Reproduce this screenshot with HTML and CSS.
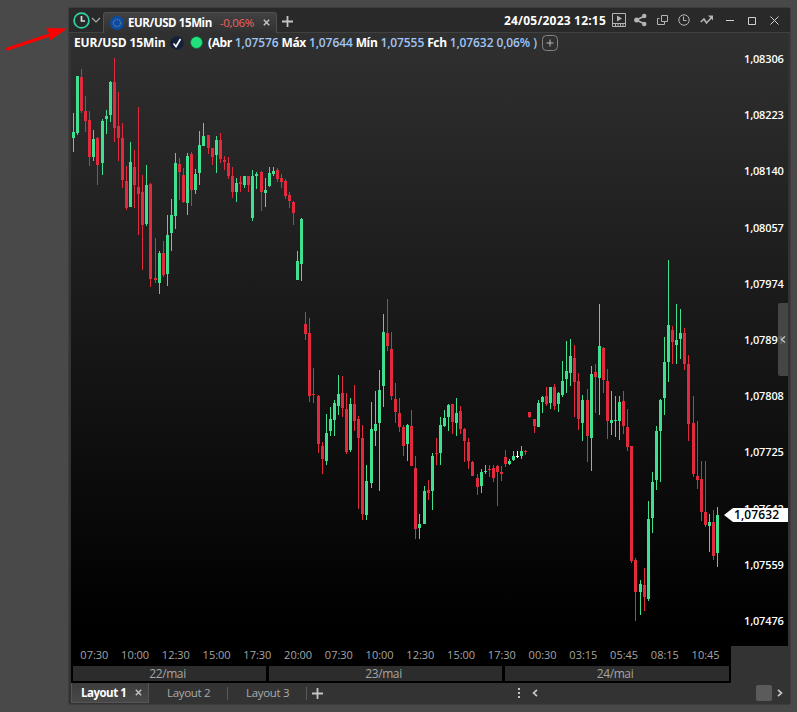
FILE: index.html
```html
<!DOCTYPE html>
<html lang="pt">
<head>
  <meta charset="UTF-8">
  <meta name="viewport" content="width=device-width, initial-scale=1.0">
  <title>EUR/USD 15Min</title>
  <link rel="stylesheet" href="styles.css">
</head>

<body>
  <div class="window">
    <header class="titlebar">
      <svg class="clock" width="17" height="17" viewBox="0 0 17 17"><circle cx="8.5" cy="8.5" r="7.4"/><path d="M8.5 4v5h3.5"/></svg>
      <svg class="chevron" width="10" height="6" viewBox="0 0 10 6"><path d="M1 1l4 4 4-4"/></svg>
      <div class="tab">
        <svg class="flag" width="14" height="14" viewBox="0 0 14 14"><circle class="disc" cx="7" cy="7" r="7"/><circle class="stars" cx="7" cy="7" r="3.6"/></svg>
        <b class="tab-name">EUR/USD 15Min</b>
        <span class="change">-0,06%</span>
        <svg class="close" width="7" height="7" viewBox="0 0 7 7"><path d="M.8.8l5.4 5.4M6.2.8L.8 6.2"/></svg>
      </div>
      <svg class="plus" width="11" height="11" viewBox="0 0 11 11"><path d="M5.5 0v11M0 5.5h11"/></svg>
      <b class="date">24/05/2023 12:15</b>
      <div class="tools">
        <svg width="14" height="14" viewBox="0 0 14 14"><path d="M.5.5h13v13H.5zM.5 10.5h13M3.5 11v2M6 11v2M8.5 11v2M11 11v2"/><path class="fill" d="M5 2.5l5 3-5 3z"/></svg>
        <svg width="13" height="14" viewBox="0 0 13 14"><path class="thick" d="M10.5 3L2.5 7l8 4"/><circle class="fill" cx="10.2" cy="3" r="2.3"/><circle class="fill" cx="2.6" cy="7" r="2.5"/><circle class="fill" cx="10.2" cy="11" r="2.3"/></svg>
        <svg width="12" height="12" viewBox="0 0 12 12"><path d="M4.5 1.5h6v6h-6zM2.5 4.5H.5v6h7V8"/></svg>
        <svg width="12" height="12" viewBox="0 0 12 12"><circle cx="6" cy="6" r="5.2"/><path d="M5.5 2.5v4h3"/></svg>
        <svg width="14" height="10" viewBox="0 0 14 10"><path class="thick" d="M.8 7L4 4l2.5 4 5.5-6"/><path class="fill" d="M8 .5h5v5z"/></svg>
      </div>
      <div class="controls">
        <svg width="8" height="9" viewBox="0 0 8 9"><path d="M0 4.5h8"/></svg>
        <svg width="8" height="9" viewBox="0 0 8 9"><path d="M.5 1.5h7v7h-7z"/></svg>
        <svg width="9" height="9" viewBox="0 0 9 9"><path d="M.5.5l8 8M8.5.5l-8 8"/></svg>
      </div>
    </header>

    <main class="chart">
      <div class="legend">
        <b class="symbol">EUR/USD 15Min</b>
        <svg class="check" width="14" height="14" viewBox="0 0 14 14"><circle cx="7" cy="7" r="6.8"/><path d="M3.5 7.5L6 10.5l4.5-7.5"/></svg>
        <i class="dot"></i>
        <div class="ohlc">
          <span>(Abr</span> <em>1,07576</em> <span>Máx</span> <em>1,07644</em> <span>Mín</span> <em>1,07555</em> <span>Fch</span> <em>1,07632</em> <em>0,06% )</em>
        </div>
        <svg class="add" width="16" height="16" viewBox="0 0 16 16"><rect x=".5" y=".5" width="15" height="15" rx="4"/><path d="M8 4.5v7M4.5 8h7"/></svg>
      </div>

      <div class="plot">
        <svg class="candles" id="candles" width="660" height="593" viewBox="71 52 660 593"></svg>
        <div class="prices">
          <span>1,08306</span><span>1,08223</span><span>1,08140</span><span>1,08057</span>
          <span>1,07974</span><span>1,07891</span><span>1,07808</span><span>1,07725</span>
          <span>1,07642</span><span>1,07559</span><span>1,07476</span>
        </div>
      </div>
      <div class="last-price">1,07632</div>
      <div class="side-handle"><svg width="6" height="7" viewBox="0 0 6 7"><path d="M5 .5l-3.5 3 3.5 3"/></svg></div>
    </main>

    <div class="axis">
      <div class="hours">
        <span>07:30</span><span>10:00</span><span>12:30</span><span>15:00</span>
        <span>17:30</span><span>20:00</span><span>07:30</span><span>10:00</span>
        <span>12:30</span><span>15:00</span><span>17:30</span><span>00:30</span>
        <span>03:15</span><span>05:45</span><span>08:15</span><span>10:45</span>
      </div>
      <div class="days"><span>22/mai</span><span>23/mai</span><span>24/mai</span></div>
    </div>

    <footer class="layouts">
      <div class="layout active"><b>Layout 1</b><svg width="7" height="7" viewBox="0 0 7 7"><path d="M.8.8l5.4 5.4M6.2.8L.8 6.2"/></svg></div>
      <div class="layout">Layout 2</div>
      <div class="layout">Layout 3</div>
      <svg class="plus" width="11" height="11" viewBox="0 0 11 11"><path d="M5.5 0v11M0 5.5h11"/></svg>
      <svg class="grip" width="2" height="10" viewBox="0 0 2 10"><path d="M0 1h2M0 5h2M0 9h2"/></svg>
      <svg class="arrow" width="6" height="8" viewBox="0 0 6 8"><path d="M5 .8L1.5 4 5 7.2"/></svg>
      <i class="thumb"></i>
      <svg class="arrow next" width="6" height="8" viewBox="0 0 6 8"><path d="M1 .8L4.5 4 1 7.2"/></svg>
    </footer>
  </div>

  <svg class="pointer" width="64" height="26" viewBox="0 0 64 26"><path class="line" d="M2.5 23L46 8.5"/><path class="head" d="M62 2.500L41 2l3.500 6 .5 6.500z"/></svg>

  <script src="chart.js"></script>
</body>
</html>
```

FILE: styles.css
```css
* {
  box-sizing: border-box;
}

body {
  margin: 0;
  height: 712px;
  padding: 7px 6px 6px 68px;
  overflow: hidden;
  background: #494949;
  font-family: "Open Sans", "Noto Sans", sans-serif;
  font-size: 12px;
  color: #fff;
}

svg {
  display: block;
  flex: none;
  fill: none;
  stroke: #c4c4c4;
}

.window {
  display: flex;
  flex-direction: column;
  width: 723px;
  height: 698px;
  background: #333;
  border: 1px solid #3d3d3d;
  border-radius: 3px;
  padding: 0 2px 1px;
}

/* title bar */
.titlebar {
  display: flex;
  align-items: center;
  flex: none;
  height: 25px;
  margin: 0 -2px;
  padding-left: 4px;
  background: #292929;
  border-bottom: 1px solid #414141;
}

.clock {
  margin-top: 1px;
  stroke: #2ed3a6;
  stroke-width: 1.7;
}

.clock path {
  stroke: #ddd;
}

.chevron {
  margin-left: 1px;
  stroke-width: 1.2;
  stroke: #aaa;
}

.tab {
  display: flex;
  align-items: center;
  width: 174px;
  height: 21px;
  margin: 4px 0 0 2px;
  padding-left: 6px;
  background: linear-gradient(#424242, #303030);
  border: 1px solid #505050;
  border-bottom: 0;
  border-radius: 3px 3px 0 0;
  white-space: nowrap;
}

.flag {
  stroke: none;
}

.flag .disc {
  fill: #0a4ba5;
}

.flag .stars {
  stroke: #58798b;
  stroke-width: 1.4;
  stroke-dasharray: 1.5 .8;
}

.tab-name {
  width: 92px;
  margin-left: 4px;
  font-size: 11.5px;
  letter-spacing: -.4px;
}

.change {
  width: 43px;
  color: #f0605e;
  font-size: 11.5px;
  letter-spacing: -.35px;
}

.close {
  stroke-width: 1.5;
}

.plus {
  margin-left: 5px;
  stroke-width: 1.8;
}

.titlebar .plus {
  margin-top: 2px;
}

.date {
  width: 108px;
  margin-left: 211px;
  padding-top: 1px;
  font-size: 12px;
  letter-spacing: .2px;
  white-space: nowrap;
}

.tools {
  display: flex;
  align-items: center;
  gap: 9px;
}

.tools svg {
  stroke: #b4b4b4;
}

.tools svg:nth-child(2) {
  margin: 0 1px 0 -1px;
}

.tools svg:nth-child(4) {
  margin-right: 1px;
}

.tools .thick {
  stroke-width: 1.6;
}

.tools .fill {
  fill: #b4b4b4;
  stroke: none;
}

.controls {
  display: flex;
  align-items: center;
  gap: 14px;
  margin-left: 12px;
}

.controls svg {
  stroke: #d0d0d0;
}

/* chart */
.chart {
  position: relative;
  flex: none;
  height: 613px;
  background: linear-gradient(#303030, #1b1b1b 42%, #000 97%);
}

.legend {
  display: flex;
  align-items: center;
  height: 19px;
  padding-left: 3px;
  white-space: nowrap;
}

.symbol {
  width: 96px;
  letter-spacing: -.1px;
}

.check {
  stroke: none;
}

.check circle {
  fill: #142038;
}

.check path {
  stroke: #fff;
  stroke-width: 1.7;
}

.dot {
  width: 13px;
  height: 13px;
  margin-left: 6px;
  border: 1px solid #17663b;
  border-radius: 50%;
  background: #21e27b;
}

.ohlc {
  width: 334px;
  margin-left: 5px;
  font-weight: 600;
  letter-spacing: -.1px;
}

.ohlc span {
  font-weight: 700;
  letter-spacing: -.4px;
}

.ohlc em {
  font-style: normal;
  color: #9fc5f5;
}

.add {
  stroke: #858585;
}

.add path {
  stroke: #bbb;
}

.plot {
  display: flex;
  height: 593px;
}

.prices {
  display: flex;
  flex-direction: column;
  justify-content: space-between;
  height: 578px;
  margin-top: -1px;
  padding-left: 13px;
  font-size: 11px;
  font-weight: 600;
  letter-spacing: -.15px;
  line-height: 16px;
}

.last-price {
  position: absolute;
  top: 475px;
  right: 0;
  width: 64px;
  height: 14px;
  padding-left: 10px;
  background: #fff;
  clip-path: polygon(0 50%, 9px 0, 100% 0, 100% 100%, 9px 100%);
  color: #000;
  font-size: 12px;
  font-weight: 600;
  letter-spacing: .1px;
  line-height: 14px;
}

.side-handle {
  position: absolute;
  top: 270px;
  right: 0;
  display: flex;
  align-items: center;
  justify-content: center;
  width: 10px;
  height: 73px;
  background: rgba(78, 78, 78, .85);
  border-radius: 2px 0 0 2px;
}

.side-handle svg {
  stroke-width: 1.4;
}

/* time axis */
.axis {
  flex: none;
  width: 660px;
  height: 37px;
  padding: 0 2px;
  background: #000;
  color: #a5a5a5;
}

.hours {
  display: flex;
  width: 653px;
  height: 20px;
  padding-left: 1px;
  font-size: 11px;
  line-height: 18px;
}

.hours span {
  flex: 1;
  text-align: center;
}

.days {
  display: grid;
  grid-template-columns: 193px 233px 224px;
  gap: 3px;
  height: 15px;
  line-height: 15px;
  letter-spacing: -.4px;
  text-align: center;
}

.days span {
  padding-right: 4px;
  background: #2c2c2c;
}

/* layout tabs */
.layouts {
  display: flex;
  align-items: center;
  flex: none;
  height: 20px;
  font-size: 11.5px;
  letter-spacing: -.3px;
  color: #aaa;
}

.layout {
  display: flex;
  align-items: center;
  width: 79px;
  height: 13px;
  padding: 0 0 1px 18px;
  border-right: 1px solid #5a5a5a;
  white-space: nowrap;
}

.layout.active {
  justify-content: space-between;
  width: 78px;
  height: 20px;
  padding: 0 6px 0 9px;
  background: linear-gradient(#3c3c3c, #484848);
  border: 1px solid #555;
  border-top: 0;
  color: #fff;
  letter-spacing: -.5px;
}

.layout.active svg {
  stroke-width: 1.4;
}

.grip {
  margin-left: 195px;
  stroke-width: 2;
}

.arrow {
  margin-left: 12px;
  stroke-width: 1.7;
}

.thumb {
  width: 16px;
  height: 16px;
  margin-left: 218px;
  background: #5b5b5b;
  border-radius: 2px;
}

.arrow.next {
  margin-left: 5px;
}

/* arrow drawn over the window edge */
.pointer {
  position: absolute;
  top: 26px;
  left: 5px;
  stroke: none;
}

.pointer .line {
  stroke: #f00;
  stroke-width: 3;
  stroke-linecap: round;
}

.pointer .head {
  fill: #f00;
}
```

FILE: chart.js
```js
const colors = { g: "#3fe08f", r: "#e3293c", w: "#ffffff" };

// x, high, body top, body bottom, low, color
const data = `
73 113 132 138 152 g|77 76 76 133 135 g|81 69 77 111 113 r|85 96 111 121 132 r
89 111 120 157 166 r|93 130 139 157 161 g|97 137 138 165 185 r|102 119 121 163 175 g
106 110 116 119 134 g|110 81 82 115 122 g|114 58 82 128 142 r|118 92 126 138 161 r
122 123 138 180 188 r|126 166 181 208 210 r|130 142 162 207 207 g|134 150 167 185 208 r
138 107 187 194 235 r|142 175 192 225 270 r|146 165 185 224 226 g|150 183 184 279 287 r
155 238 278 280 283 r|159 251 253 283 294 g|163 241 253 275 277 r|167 215 235 274 286 g
171 199 215 233 251 g|175 153 163 216 229 g|179 158 164 172 200 r|183 168 175 202 203 r
187 153 156 203 215 g|191 152 154 190 206 r|195 169 174 190 194 g|199 131 145 173 185 g
203 123 136 146 146 g|208 135 135 148 154 r|212 148 148 157 165 r|216 136 140 155 173 g
220 133 140 159 163 r|224 156 160 162 170 r|228 157 163 176 179 r|232 167 176 192 198 r
236 178 183 192 202 g|240 176 182 184 192 r|244 176 176 185 188 g|248 176 176 185 192 r
252 170 176 218 221 g|256 172 174 176 189 g|261 171 172 192 211 r|265 178 190 193 207 g
269 167 173 186 187 g|273 167 171 174 176 g|277 168 170 179 182 r|281 174 178 182 188 r
285 179 181 196 199 r|289 192 195 201 208 r|293 201 202 213 225 r|297 251 261 280 280 g
301 218 219 264 281 g|305 312 324 334 340 r|309 318 333 396 402 r|313 368 394 395 403 r
318 395 396 444 453 r|322 442 446 459 474 r|326 414 433 461 465 g|330 407 419 431 436 g
334 400 403 420 436 g|338 375 394 406 415 g|342 376 393 408 417 r|346 393 409 452 454 r
350 398 404 450 452 g|354 385 404 421 431 r|358 416 419 438 509 r|362 425 438 514 520 r
366 465 481 515 520 g|371 402 429 483 488 g|375 391 424 431 446 g|379 370 390 423 491 g
383 314 332 386 407 g|387 299 333 346 351 r|391 332 349 396 400 r|395 383 399 412 423 r
399 398 413 427 432 r|403 425 427 446 456 r|407 424 425 444 461 g|411 410 426 466 466 r
415 456 468 529 539 r|419 514 524 528 539 g|424 486 491 524 524 g|428 480 490 493 500 r
432 453 456 491 510 g|436 438 453 454 465 r|440 417 425 453 465 g|444 410 418 426 427 g
448 404 405 417 431 g|452 404 404 422 434 r|456 398 413 423 436 g|460 406 411 429 434 r
464 428 429 441 462 r|468 438 442 461 469 r|472 461 462 476 476 r|477 474 478 487 495 r
481 469 472 486 493 g|485 465 471 472 474 g|489 465 469 470 477 r|493 465 468 478 482 r
497 465 466 472 506 r|501 466 472 474 481 r|505 450 457 464 467 r|509 459 461 464 465 g
513 451 456 460 461 g|517 451 456 457 458 w|521 446 451 456 459 g|525 450 451 452 455 r
529 412 412 417 418 r|534 419 419 426 433 r|538 400 403 427 427 g|542 396 397 402 413 g
546 387 396 404 406 r|550 387 387 403 409 g|554 384 387 406 410 r|558 392 393 404 412 g
562 361 381 395 397 g|566 341 371 379 393 g|570 339 356 373 386 g|574 345 358 382 417 r
578 373 381 419 430 r|582 395 400 423 441 g|587 389 400 436 462 r|591 366 374 438 471 g
595 364 372 377 413 r|599 304 346 378 415 g|603 347 348 380 393 r|607 369 381 421 439 r
611 391 420 423 435 g|615 396 420 421 437 g|619 396 402 421 440 g|623 391 401 426 434 r
627 409 427 447 451 r|631 446 446 561 563 r|635 558 560 592 621 r|640 580 584 592 615 g
644 568 585 597 611 r|648 501 519 599 601 g|652 472 482 518 533 g|656 426 431 480 490 g
660 399 400 431 482 g|664 337 362 398 415 g|668 260 325 362 382 g|672 326 330 342 364 r
676 304 340 345 364 g|680 309 333 339 359 g|684 328 333 364 370 r|688 355 364 424 441 r
693 396 423 474 477 r|697 421 476 480 489 r|701 461 479 512 521 r|705 461 512 525 527 r
709 514 522 526 552 g|713 510 522 556 560 r|717 507 515 553 567 g`;

const svg = document.getElementById("candles");

function rect(x, y, width, height, fill) {
  const el = document.createElementNS("http://www.w3.org/2000/svg", "rect");
  Object.entries({ x, y, width, height, fill, stroke: "none" }).forEach(([k, v]) => el.setAttribute(k, v));
  svg.appendChild(el);
}

data.trim().split(/[|\n]/).forEach(row => {
  const [x, high, top, bottom, low, color] = row.split(" ");
  rect(+x, +high, 1, low - high, colors[color]);
  rect(x - 1, +top, 3, bottom - top, colors[color]);
});
```
